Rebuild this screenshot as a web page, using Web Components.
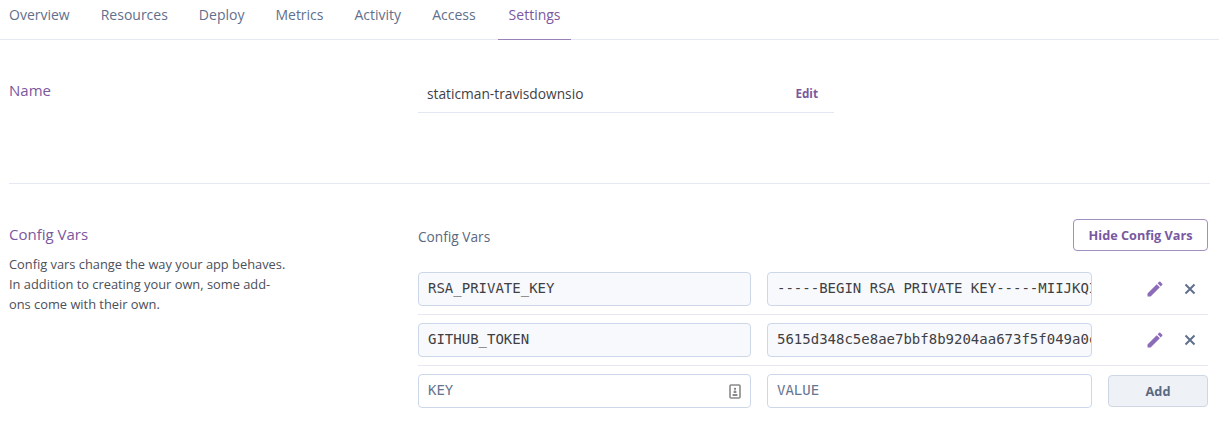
<!DOCTYPE html>
<html>
<head>
<meta charset="utf-8">
<title>Settings</title>
<style>
  html, body { margin: 0; background: #fff; }
  body { font-family: "Open Sans", sans-serif; color: #3f3f44; overflow: hidden; }
</style>
</head>
<body>
<app-tabs>
  <app-tab>Overview</app-tab>
  <app-tab>Resources</app-tab>
  <app-tab>Deploy</app-tab>
  <app-tab>Metrics</app-tab>
  <app-tab>Activity</app-tab>
  <app-tab>Access</app-tab>
  <app-tab active>Settings</app-tab>
</app-tabs>

<settings-section heading="Name" style="--section-height: 144px; --heading-top: 40px">
  <name-field>staticman-travisdownsio</name-field>
</settings-section>

<settings-section heading="Config Vars" style="--section-height: auto; --heading-top: 40px; --content-top: 35px">
  <span slot="desc">Config vars change the way your app behaves. In addition to creating your own, some add-ons come with their own.</span>
  <config-vars>
    <config-row name="RSA_PRIVATE_KEY" value="-----BEGIN RSA PRIVATE KEY-----MIIJKQIBAAKCAgEA"></config-row>
    <config-row name="GITHUB_TOKEN" value="5615d348c5e8ae7bbf8b9204aa673f5f049a0c8e"></config-row>
    <config-add></config-add>
  </config-vars>
</settings-section>

<script>
// tab strip along the top
const tabsTemplate = document.createElement("template");
tabsTemplate.innerHTML = `
  <style>
    :host { display: flex; height: 39px; border-bottom: 1px solid #e7e9f2; padding-left: 9px; }
  </style>
  <slot></slot>
`;
class AppTabs extends HTMLElement {
  constructor() {
    super();
    this.attachShadow({ mode: "open" });
    this.shadowRoot.appendChild(tabsTemplate.content.cloneNode(true));
  }
}
customElements.define("app-tabs", AppTabs);

const tabTemplate = document.createElement("template");
tabTemplate.innerHTML = `
  <style>
    :host {
      display: block; margin-right: 31px; height: 39px; line-height: 30px;
      font-size: 14px; color: #5f6f8c; position: relative; white-space: nowrap;
    }
    :host([active]) { color: #79589f; margin-left: 2px; }
    :host([active])::after {
      content: ""; position: absolute; left: -11px; right: -10px; top: 39px;
      height: 1px; background: #9a82b8;
    }
  </style>
  <slot></slot>
`;
class AppTab extends HTMLElement {
  constructor() {
    super();
    this.attachShadow({ mode: "open" });
    this.shadowRoot.appendChild(tabTemplate.content.cloneNode(true));
  }
}
customElements.define("app-tab", AppTab);

// two columns: heading + blurb on the left, content on the right
const sectionTemplate = document.createElement("template");
sectionTemplate.innerHTML = `
  <style>
    :host {
      display: grid; grid-template-columns: 409px 790px; margin: 0 9px 0 9px;
      height: var(--section-height); box-sizing: border-box;
    }
    :host(:not(:last-of-type)) { border-bottom: 1px solid #e7e9f2; width: 1201px; }
    .left { padding-top: var(--heading-top); }
    h2 { margin: 0; font-weight: 400; font-size: 15px; line-height: 20px; color: #79589f; }
    p { margin: 10px 0 0; font-size: 12.85px; line-height: 20px; width: 279px; color: #4b4f5a; }
    .right { padding-top: var(--content-top, 40px); }
  </style>
  <div class="left">
    <h2></h2>
    <p><slot name="desc"></slot></p>
  </div>
  <div class="right"><slot></slot></div>
`;
class SettingsSection extends HTMLElement {
  constructor() {
    super();
    this.attachShadow({ mode: "open" });
    this.shadowRoot.appendChild(sectionTemplate.content.cloneNode(true));
    this.shadowRoot.querySelector("h2").textContent = this.getAttribute("heading");
  }
}
customElements.define("settings-section", SettingsSection);

const nameTemplate = document.createElement("template");
nameTemplate.innerHTML = `
  <style>
    :host {
      display: flex; justify-content: space-between; align-items: flex-start;
      width: 416px; height: 33px; box-sizing: border-box; padding: 4px 16px 0 9px;
      border-bottom: 1px solid #e3e7f1; font-size: 13.75px; line-height: 20px; color: #3f3f44;
    }
    b { font-size: 11.7px; font-weight: 700; color: #79589f; line-height: 18px; }
  </style>
  <span><slot></slot></span>
  <b>Edit</b>
`;
class NameField extends HTMLElement {
  constructor() {
    super();
    this.attachShadow({ mode: "open" });
    this.shadowRoot.appendChild(nameTemplate.content.cloneNode(true));
  }
}
customElements.define("name-field", NameField);

const varsTemplate = document.createElement("template");
varsTemplate.innerHTML = `
  <style>
    :host { display: block; }
    header { display: flex; justify-content: space-between; align-items: center; height: 32px; margin-bottom: 21px; }
    span { font-size: 13.7px; color: #596981; padding-top: 2px; }
    button {
      width: 135px; height: 32px; box-sizing: border-box; background: #fff;
      border: 1px solid #a18fbe; border-radius: 4px; color: #79589f;
      font: 700 12.7px "Open Sans", sans-serif; padding: 0;
    }
  </style>
  <header><span>Config Vars</span><button>Hide Config Vars</button></header>
  <slot></slot>
`;
class ConfigVars extends HTMLElement {
  constructor() {
    super();
    this.attachShadow({ mode: "open" });
    this.shadowRoot.appendChild(varsTemplate.content.cloneNode(true));
  }
}
customElements.define("config-vars", ConfigVars);

const fieldStyles = `
  .field {
    box-sizing: border-box; height: 34px; border: 1px solid #cdd7ea;
    border-radius: 4px; padding: 0 0 0 9px; background: #f8f9fd; overflow: hidden;
    white-space: nowrap; font: 14px/30px "DejaVu Sans Mono", monospace; color: #3f3f44;
  }
  .name { width: 333px; }
  .value { width: 325px; margin-left: 16px; padding-right: 0; }
  .value span { display: block; width: 314px; overflow: hidden; }
`;

const rowTemplate = document.createElement("template");
rowTemplate.innerHTML = `
  <style>
    :host {
      display: flex; align-items: flex-start; height: 42px;
      border-bottom: 1px solid #e7e9f2; margin-bottom: 8px;
    }
    ${fieldStyles}
    .actions { display: flex; align-items: center; height: 34px; margin-left: 53px; }
    svg { display: block; }
    .x { margin-left: 19px; }
  </style>
  <div class="field name"></div>
  <div class="field value"><span></span></div>
  <div class="actions">
    <svg width="20" height="20" viewBox="0 0 24 24" fill="#8c6cb8"><path d="M3 17.25V21h3.75L17.81 9.94l-3.75-3.75L3 17.25zM20.71 7.04a1 1 0 0 0 0-1.41l-2.34-2.34a1 1 0 0 0-1.41 0l-1.83 1.83 3.75 3.75 1.83-1.83z"/></svg>
    <svg class="x" width="12" height="12" viewBox="0 0 12 12" stroke="#5f6f8c" stroke-width="2" fill="none"><path d="M1.5 1.5l9 9M10.5 1.5l-9 9"/></svg>
  </div>
`;
class ConfigRow extends HTMLElement {
  constructor() {
    super();
    this.attachShadow({ mode: "open" });
    this.shadowRoot.appendChild(rowTemplate.content.cloneNode(true));
    this.shadowRoot.querySelector(".name").textContent = this.getAttribute("name");
    this.shadowRoot.querySelector(".value span").textContent = this.getAttribute("value");
  }
}
customElements.define("config-row", ConfigRow);

const addTemplate = document.createElement("template");
addTemplate.innerHTML = `
  <style>
    :host { display: flex; align-items: flex-start; }
    ${fieldStyles}
    .field { background: #fff; color: #66758f; position: relative; }
    .key {
      position: absolute; right: 9px; top: 9px; display: block;
    }
    button {
      margin: 1px 0 0 16px; width: 100px; height: 32px; box-sizing: border-box;
      background: #eef1f6; border: 1px solid #cfd7e6; border-radius: 4px; padding: 0;
      color: #596981; font: 700 12.7px "Open Sans", sans-serif;
    }
  </style>
  <div class="field name">KEY
    <svg class="key" width="12" height="15" viewBox="0 0 12 15" fill="none">
      <rect x="1" y="1" width="10" height="13" rx="1" stroke="#8a8a8a" stroke-width="1.6"/>
      <circle cx="6" cy="4.8" r="1.1" fill="#7a7a7a"/>
      <path d="M4.6 9V7.4c0-.6.6-1 1.4-1s1.4.4 1.4 1V9zM3.6 10h4.8v2H3.6z" fill="#8a8a8a"/>
    </svg>
  </div>
  <div class="field value">VALUE</div>
  <button>Add</button>
`;
class ConfigAdd extends HTMLElement {
  constructor() {
    super();
    this.attachShadow({ mode: "open" });
    this.shadowRoot.appendChild(addTemplate.content.cloneNode(true));
  }
}
customElements.define("config-add", ConfigAdd);
</script>
</body>
</html>
